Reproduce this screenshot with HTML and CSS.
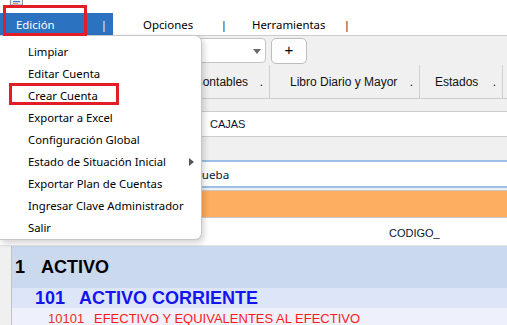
FILE: index.html
```html
<!DOCTYPE html>
<html lang="es">
<head>
<meta charset="utf-8">
<title>Plan de Cuentas</title>
<link rel="stylesheet" href="styles.css">
</head>
<body>
<div class="app">
  <div class="titlebar">
    <svg class="appicon" width="13" height="6" viewBox="0 0 13 6">
      <rect x="0.5" y="-3" width="12" height="8" fill="#e8eef6" stroke="#8a94a6"/>
      <rect x="3" y="1" width="7" height="1.2" fill="#3a78c8"/>
      <rect x="3" y="3" width="5" height="1" fill="#e89a3a"/>
    </svg>
  </div>
  <div class="menubar">
    <div class="mi mi-active"><span>Edición</span><span class="sep">|</span></div>
    <div class="mi mi-2"><span>Opciones</span><span class="sep">|</span></div>
    <div class="mi mi-3"><span>Herramientas</span><span class="sep">|</span></div>
  </div>
  <div class="panel">
    <div class="toolbar">
      <div class="combo"><span class="caret"></span></div>
      <button class="plus">+</button>
    </div>
    <div class="tabs">
      <div class="tab tab-a"></div>
      <div class="tab tab-b"><span>Cuentas Contables</span><span class="dot">.</span></div>
      <div class="tab tab-c"><span>Libro Diario y Mayor</span><span class="dot">.</span></div>
      <div class="tab tab-d"><span>Estados</span><span class="dot">.</span></div>
    </div>
    <div class="gap-a"></div>
    <div class="field-row"><span class="cajas">CAJAS</span></div>
    <div class="gap-b"></div>
    <div class="input-row"><span class="prueba">Prueba</span></div>
    <div class="orange-row"></div>
    <div class="col-header"><span class="codigo">CODIGO_</span></div>
    <div class="grid">
      <div class="rowheads"></div>
      <div class="rows">
        <div class="row lvl1"><span class="code">1</span><span>ACTIVO</span></div>
        <div class="row lvl2"><span class="code">101</span><span>ACTIVO CORRIENTE</span></div>
        <div class="row lvl3"><span class="code">10101</span><span>EFECTIVO Y EQUIVALENTES AL EFECTIVO</span></div>
      </div>
    </div>
  </div>

  <div class="dropdown">
    <div class="item">Limpiar</div>
    <div class="item">Editar Cuenta</div>
    <div class="item">Crear Cuenta</div>
    <div class="item">Exportar a Excel</div>
    <div class="item">Configuración Global</div>
    <div class="item has-sub">Estado de Situación Inicial<span class="subarrow"></span></div>
    <div class="item">Exportar Plan de Cuentas</div>
    <div class="item">Ingresar Clave Administrador</div>
    <div class="item">Salir</div>
  </div>

  <div class="mark mark-menu"></div>
  <div class="mark mark-item"></div>
</div>
</body>
</html>
```

FILE: styles.css
```css
* { box-sizing: border-box; }
html, body { margin: 0; padding: 0; }
body {
  width: 507px;
  height: 325px;
  overflow: hidden;
  background: #ffffff;
  font-family: "Noto Sans", "Liberation Sans", sans-serif;
  font-size: 11.3px;
  color: #000;
}
.app { position: relative; width: 507px; height: 325px; overflow: hidden; }

.titlebar { height: 13px; padding-left: 10px; }
.appicon { display: block; }

.menubar { height: 22px; display: flex; font-size: 11.4px; }
.mi { display: flex; align-items: center; height: 22px; }
.mi .sep { margin-left: auto; margin-right: 6px; color: #222; }
.mi-active { width: 113px; padding-left: 16px; background: #2b73c1; color: #fff; }
.mi-active .sep { color: #fff; }
.mi-2 { width: 120px; padding-left: 30px; }
.mi-3 { width: 123px; padding-left: 19px; }

.panel { background: #f0f0f0; border-top: 1px solid #cccccc; }

.toolbar { height: 29px; display: flex; align-items: flex-start; padding-top: 2px; }
.combo {
  position: relative;
  margin-left: 60px; width: 206px; height: 25px;
  background: #fff; border: 1px solid #c4c4c4; border-radius: 4px;
}
.caret {
  position: absolute; right: 4px; top: 10px;
  width: 0; height: 0;
  border-left: 4px solid transparent; border-right: 4px solid transparent;
  border-top: 5px solid #6a6a6a;
}
.plus {
  margin-left: 5px; width: 36px; height: 26px;
  background: #fdfdfd; border: 1px solid #bdbdbd; border-radius: 5px;
  font-family: "Liberation Sans", sans-serif; font-size: 15px; color: #000;
  padding: 0 0 2px 0; line-height: 20px;
}

.tabs {
  height: 34px; display: flex;
  border-bottom: 1px solid #cccccc;
  font-family: "Liberation Sans", Arial, sans-serif; font-size: 12px; color: #111;
}
.tab {
  display: flex; align-items: center; height: 33px;
  border-right: 1px solid #cfcfcf; padding-right: 6px;
}
.tab .dot { margin-left: auto; }
.tab-a { width: 130px; padding-left: 20px; }
.tab-b { width: 140px; padding-left: 16px; }
.tab-c { width: 150px; padding-left: 20px; }
.tab-d { width: 83px; padding-left: 15px; }

.gap-a { height: 12px; }
.field-row {
  height: 26px; background: #fff;
  border-top: 1px solid #cccccc; border-bottom: 1px solid #cccccc;
  display: flex; align-items: center; padding-left: 210px;
  font-family: "Liberation Sans", Arial, sans-serif; font-size: 11px; color: #0b1230;
}
.gap-b { height: 23px; }
.input-row {
  height: 28px; background: #fff;
  border-top: 2px solid #9dc0e6; border-bottom: 2px solid #9dc0e6;
  display: flex; align-items: center; padding-left: 190px;
  font-size: 11.6px; color: #0a1a3a;
}
.orange-row {
  margin-top: 2px; height: 28px; background: #fdae60;
  border-top: 1px solid #c8c8c8; border-bottom: 1px solid #c8c8c8;
}
.col-header {
  height: 27px; background: #fff; padding-left: 389px; padding-top: 9px;
  font-family: "Liberation Sans", Arial, sans-serif; font-size: 11px; color: #0b1230;
}
.grid { display: flex; border-top: 1px solid #e4e4e4; }
.rowheads { width: 12px; background: #f0f0f0; border-right: 1px solid #c2c2c2; }
.rows { flex: 1; }
.row { display: flex; align-items: center; font-family: "Liberation Sans", Arial, sans-serif; white-space: nowrap; }
.lvl1 { height: 42px; background: #cbd9ef; font-size: 18px; font-weight: bold; color: #000; padding-left: 3px; }
.lvl1 .code { width: 26px; }
.lvl2 { height: 20px; background: #dce6f8; font-size: 18px; font-weight: bold; color: #1414f0; padding-left: 23px; }
.lvl2 .code { width: 44px; }
.lvl3 { height: 20px; background: #eef0fc; font-size: 13px; color: #ff1a1a; padding-left: 36px; }
.lvl3 .code { width: 46px; color: #e8301c; }

.dropdown {
  position: absolute; left: 0; top: 35px;
  width: 202px; height: 205px;
  background: #fff;
  border: 1px solid #c6c6c6; border-left: none;
  border-radius: 0 7px 7px 0;
  box-shadow: 2px 3px 6px rgba(0, 0, 0, 0.18);
  padding-top: 5px;
}
.item {
  position: relative;
  height: 22px; line-height: 22px; padding-left: 28px;
  font-size: 11.3px; color: #000; white-space: nowrap;
}
.subarrow {
  position: absolute; left: 189px; top: 7px;
  width: 0; height: 0;
  border-top: 4px solid transparent; border-bottom: 4px solid transparent;
  border-left: 5px solid #555;
}

.mark { position: absolute; border: 3px solid #e21d26; }
.mark-menu { left: 3px; top: 5px; width: 84px; height: 31px; }
.mark-item { left: 9px; top: 83px; width: 110px; height: 22px; }
```
